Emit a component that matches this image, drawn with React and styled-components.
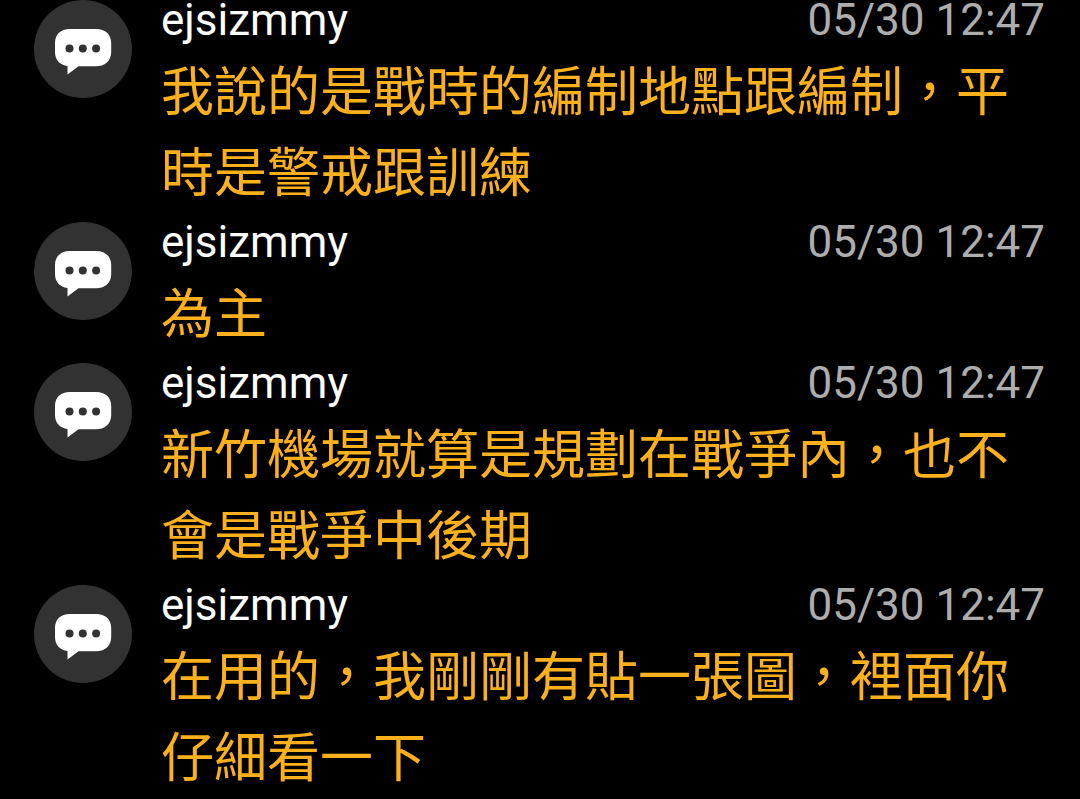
import React from "react";
import styled, { createGlobalStyle } from "styled-components";

const GlobalStyle = createGlobalStyle`
  body {
    margin: 0;
    background: #000;
    font-family: Roboto, "Noto Sans CJK TC", sans-serif;
  }
`;

const CommentList = styled.main`
  display: flex;
  flex-direction: column;
`;

const Comment = styled.article`
  display: flex;
  align-items: flex-start;
  gap: 29px;
  padding: 0 35px 0 34px;
`;

const Avatar = styled.div`
  display: flex;
  flex: none;
  width: 98px;
  height: 98px;
  border-radius: 50%;
  background: #323232;
`;

const Body = styled.div`
  flex: 1;
  min-width: 0;
`;

const Header = styled.header`
  display: flex;
  justify-content: space-between;
  padding-bottom: 13px;
  font-size: 44px;
  line-height: 40px;
`;

const Author = styled.span`
  color: #fff;
`;

const Time = styled.time`
  color: #adadad;
`;

const Message = styled.p`
  margin: 0;
  padding-bottom: 7px;
  color: #fcb11c;
  font-size: 53px;
  line-height: 81px;
`;

const comments = [
  "我說的是戰時的編制地點跟編制，平時是警戒跟訓練",
  "為主",
  "新竹機場就算是規劃在戰爭內，也不會是戰爭中後期",
  "在用的，我剛剛有貼一張圖，裡面你仔細看一下",
];

function ChatIcon() {
  return (
    <svg width="98" height="98" viewBox="0 0 98 98" aria-hidden="true">
      <path
        d="M36 29H62C71.5 29 77.2 34.500 77.200 43V52C77.200 60.500 71.500 66.200 62 66.200H44.500L33.500 74.500V66C26 65.200 21 60 21 52V43C21 34.500 26.500 29 36 29Z"
        fill="#fff"
      />
      <circle cx="35.500" cy="48.500" r="4" fill="#323232" />
      <circle cx="48.800" cy="48.500" r="4" fill="#323232" />
      <circle cx="62.100" cy="48.500" r="4" fill="#323232" />
    </svg>
  );
}

export default function App() {
  return (
    <>
      <GlobalStyle />
      <CommentList>
        {comments.map((text) => (
          <Comment key={text}>
            <Avatar>
              <ChatIcon />
            </Avatar>
            <Body>
              <Header>
                <Author>ejsizmmy</Author>
                <Time dateTime="05-30T12:47">05/30 12:47</Time>
              </Header>
              <Message lang="zh-Hant">{text}</Message>
            </Body>
          </Comment>
        ))}
      </CommentList>
    </>
  );
}
